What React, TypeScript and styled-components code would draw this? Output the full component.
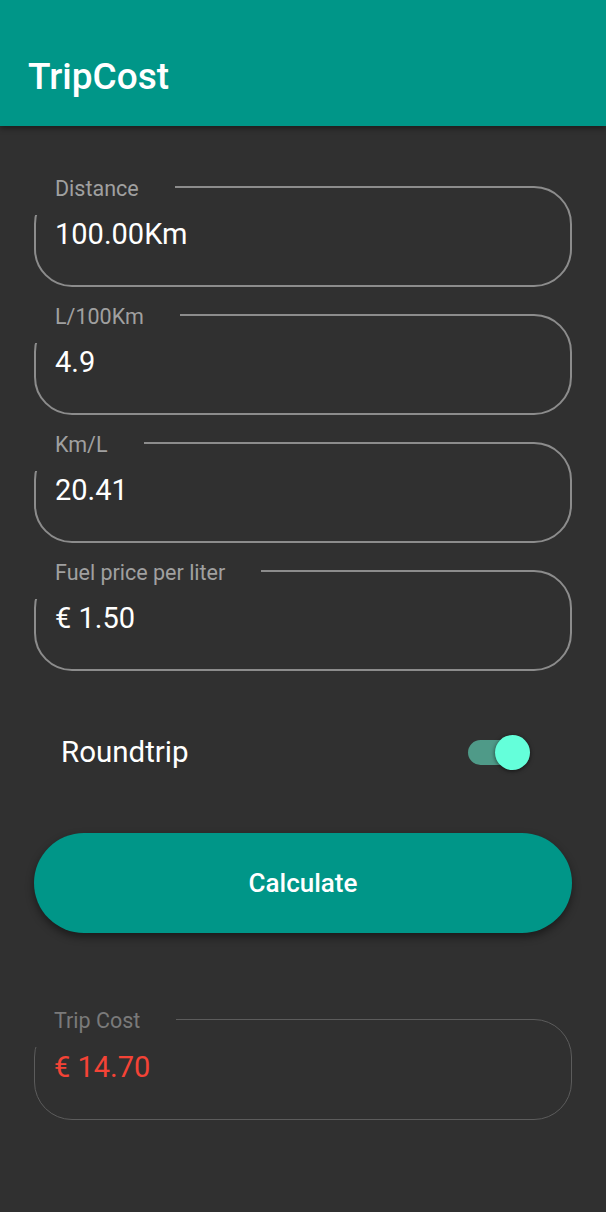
import React from "react";
import styled, { createGlobalStyle } from "styled-components";

const Global = createGlobalStyle`
  html, body { margin: 0; padding: 0; background: #303030; }
  body { font-family: Roboto, "Noto Sans", sans-serif; }
`;

const Page = styled.div`
  min-height: 1212px;
  background: #303030;
  display: flex;
  flex-direction: column;
`;

const AppBar = styled.header`
  height: 126px;
  background: #009688;
  box-shadow: 0 2px 6px rgba(0, 0, 0, 0.45);
  display: flex;
  align-items: center;
  padding: 27px 0 0 28px;
  box-sizing: border-box;
  position: relative;
  z-index: 1;
`;

const Title = styled.h1`
  margin: 0;
  color: #ffffff;
  font-size: 37px;
  font-weight: 500;
  letter-spacing: 0;
`;

const Content = styled.main`
  display: flex;
  flex-direction: column;
  padding: 60px 34px 0 34px;
`;

const Fields = styled.div`
  display: flex;
  flex-direction: column;
  gap: 27px;
`;

const FieldBox = styled.div<{ $disabled?: boolean }>`
  position: relative;
  height: 101px;
  box-sizing: border-box;
  border: ${(p) => (p.$disabled ? "1px solid #5c5c5c" : "2px solid #8c8c8c")};
  border-radius: 38px;
  display: flex;
  align-items: center;
  padding: 0 0 6px 19px;
`;

const Label = styled.span<{ $disabled?: boolean }>`
  position: absolute;
  top: -12px;
  left: -3px;
  height: 39px;
  padding: 0 36px 0 22px;
  background: #303030;
  color: ${(p) => (p.$disabled ? "#7a7a7a" : "#a0a0a0")};
  font-size: 21.5px;
  line-height: 26px;
`;

const Value = styled.div<{ $color?: string }>`
  color: ${(p) => p.$color ?? "#ffffff"};
  font-size: 29px;
  line-height: 36px;
`;

const ToggleRow = styled.div`
  display: flex;
  align-items: center;
  justify-content: space-between;
  height: 82px;
  margin: 40px 0 0 0;
  padding: 0 58px 0 27px;
`;

const ToggleLabel = styled.span`
  color: #ffffff;
  font-size: 29.5px;
`;

const Switch = styled.span`
  position: relative;
  width: 46px;
  height: 25px;
  border-radius: 13px;
  background: #4f9a88;
`;

const Thumb = styled.span`
  position: absolute;
  right: -16px;
  top: -5px;
  width: 35px;
  height: 35px;
  border-radius: 50%;
  background: #64ffda;
  box-shadow: 0 1px 4px rgba(0, 0, 0, 0.6);
`;

const Button = styled.button`
  margin-top: 40px;
  height: 100px;
  border: none;
  border-radius: 50px;
  background: #009688;
  color: #ffffff;
  font-family: Roboto, sans-serif;
  font-size: 26px;
  font-weight: 500;
  box-shadow: 0 4px 8px rgba(0, 0, 0, 0.45);
`;

const ResultWrap = styled.div`
  margin-top: 86px;
`;

type FieldProps = { label: string; value: string; disabled?: boolean; color?: string };

function Field({ label, value, disabled, color }: FieldProps) {
  return (
    <FieldBox $disabled={disabled}>
      <Label $disabled={disabled}>{label}</Label>
      <Value $color={color}>{value}</Value>
    </FieldBox>
  );
}

export default function App() {
  return (
    <Page>
      <Global />
      <AppBar>
        <Title>TripCost</Title>
      </AppBar>
      <Content>
        <Fields>
          <Field label="Distance" value="100.00Km" />
          <Field label="L/100Km" value="4.9" />
          <Field label="Km/L" value="20.41" />
          <Field label="Fuel price per liter" value="€ 1.50" />
        </Fields>
        <ToggleRow>
          <ToggleLabel>Roundtrip</ToggleLabel>
          <Switch>
            <Thumb />
          </Switch>
        </ToggleRow>
        <Button>Calculate</Button>
        <ResultWrap>
          <Field label="Trip Cost" value="€ 14.70" disabled color="#f44336" />
        </ResultWrap>
      </Content>
    </Page>
  );
}
